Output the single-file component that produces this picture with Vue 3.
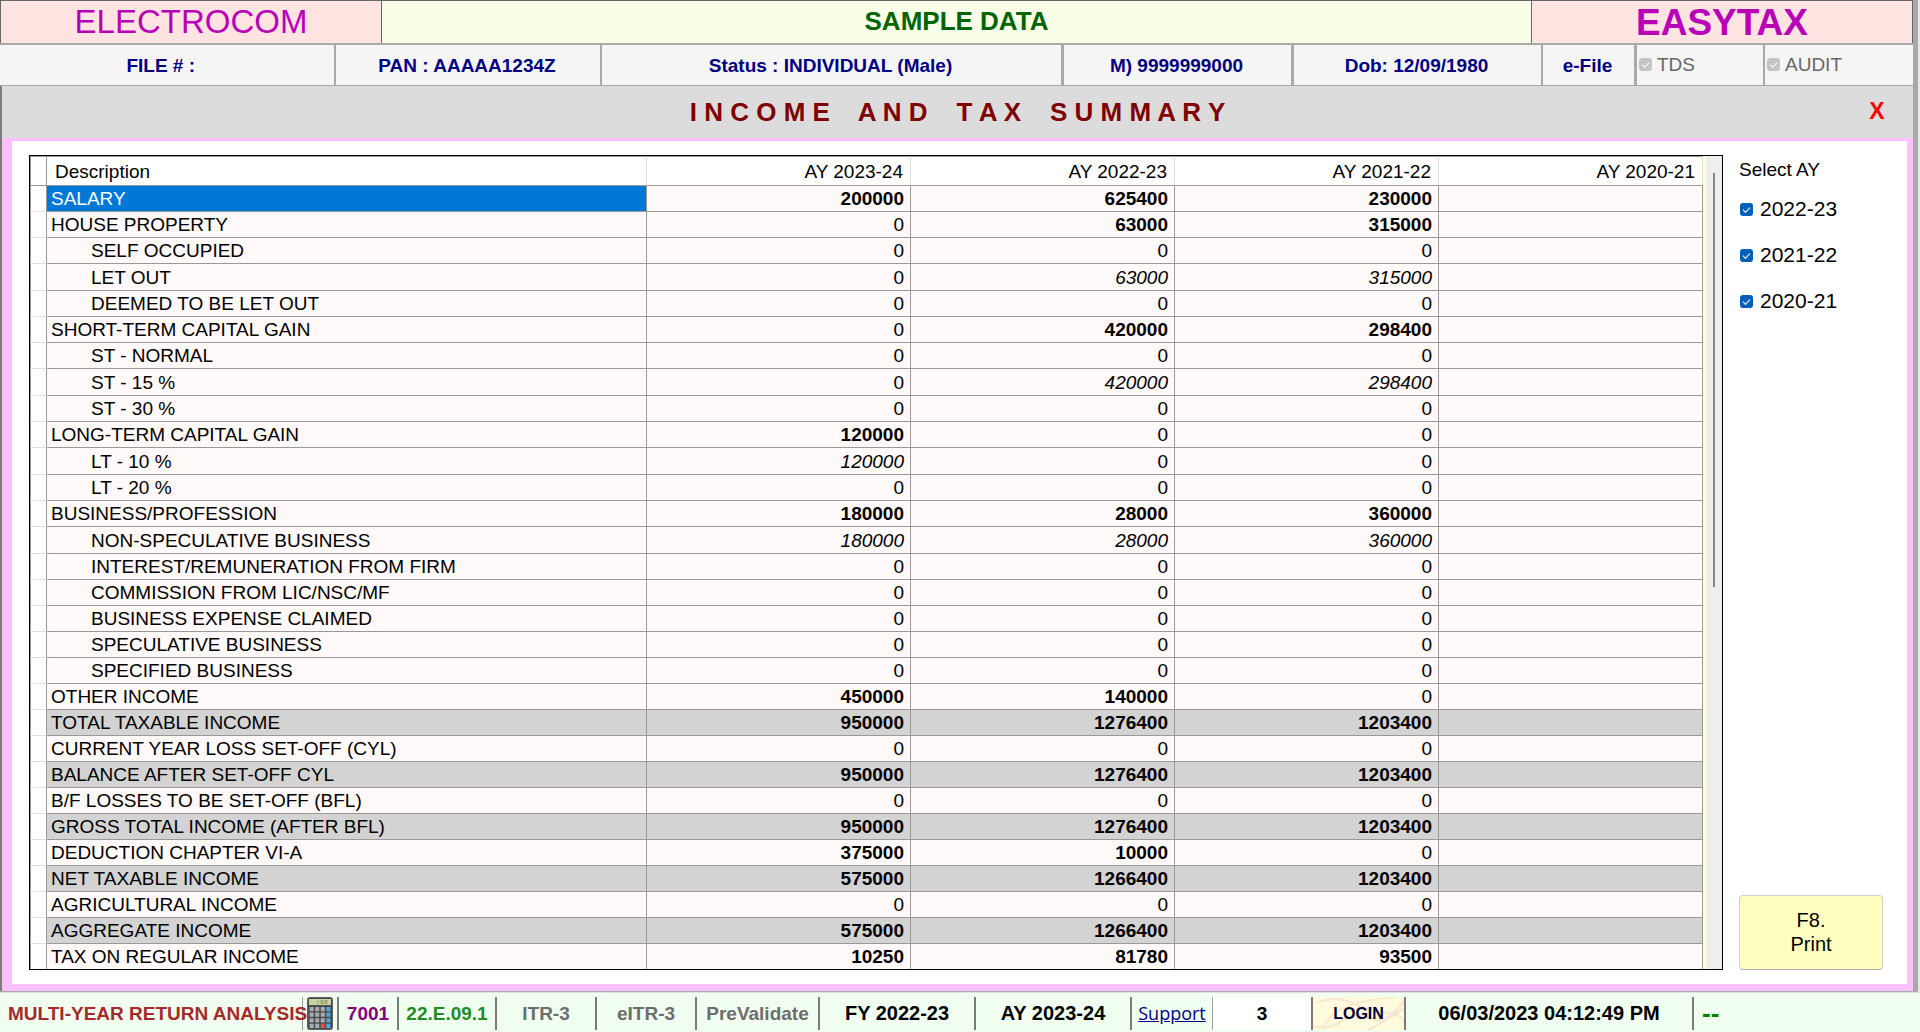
<script setup>
import { reactive } from 'vue'

const title = ['INCOME', 'AND', 'TAX', 'SUMMARY']
  .map((word) => word.split('').join(' '))
  .join('    ')

const years = ['2023-24', '2022-23', '2021-22', '2020-21']

// kind: b = bold amount, i = italic amount, n = plain amount
const rows = [
  { label: 'SALARY', cells: ['b200000', 'b625400', 'b230000'], selected: true },
  { label: 'HOUSE PROPERTY', cells: ['n0', 'b63000', 'b315000'] },
  { label: 'SELF OCCUPIED', sub: true, cells: ['n0', 'n0', 'n0'] },
  { label: 'LET OUT', sub: true, cells: ['n0', 'i63000', 'i315000'] },
  { label: 'DEEMED TO BE LET OUT', sub: true, cells: ['n0', 'n0', 'n0'] },
  { label: 'SHORT-TERM CAPITAL GAIN', cells: ['n0', 'b420000', 'b298400'] },
  { label: 'ST - NORMAL', sub: true, cells: ['n0', 'n0', 'n0'] },
  { label: 'ST - 15 %', sub: true, cells: ['n0', 'i420000', 'i298400'] },
  { label: 'ST - 30 %', sub: true, cells: ['n0', 'n0', 'n0'] },
  { label: 'LONG-TERM CAPITAL GAIN', cells: ['b120000', 'n0', 'n0'] },
  { label: 'LT - 10 %', sub: true, cells: ['i120000', 'n0', 'n0'] },
  { label: 'LT - 20 %', sub: true, cells: ['n0', 'n0', 'n0'] },
  { label: 'BUSINESS/PROFESSION', cells: ['b180000', 'b28000', 'b360000'] },
  { label: 'NON-SPECULATIVE BUSINESS', sub: true, cells: ['i180000', 'i28000', 'i360000'] },
  { label: 'INTEREST/REMUNERATION FROM FIRM', sub: true, cells: ['n0', 'n0', 'n0'] },
  { label: 'COMMISSION FROM LIC/NSC/MF', sub: true, cells: ['n0', 'n0', 'n0'] },
  { label: 'BUSINESS EXPENSE CLAIMED', sub: true, cells: ['n0', 'n0', 'n0'] },
  { label: 'SPECULATIVE BUSINESS', sub: true, cells: ['n0', 'n0', 'n0'] },
  { label: 'SPECIFIED BUSINESS', sub: true, cells: ['n0', 'n0', 'n0'] },
  { label: 'OTHER INCOME', cells: ['b450000', 'b140000', 'n0'] },
  { label: 'TOTAL TAXABLE INCOME', total: true, cells: ['b950000', 'b1276400', 'b1203400'] },
  { label: 'CURRENT YEAR LOSS SET-OFF (CYL)', cells: ['n0', 'n0', 'n0'] },
  { label: 'BALANCE AFTER SET-OFF CYL', total: true, cells: ['b950000', 'b1276400', 'b1203400'] },
  { label: 'B/F LOSSES TO BE SET-OFF (BFL)', cells: ['n0', 'n0', 'n0'] },
  { label: 'GROSS TOTAL INCOME (AFTER BFL)', total: true, cells: ['b950000', 'b1276400', 'b1203400'] },
  { label: 'DEDUCTION CHAPTER VI-A', cells: ['b375000', 'b10000', 'n0'] },
  { label: 'NET TAXABLE INCOME', total: true, cells: ['b575000', 'b1266400', 'b1203400'] },
  { label: 'AGRICULTURAL INCOME', cells: ['n0', 'n0', 'n0'] },
  { label: 'AGGREGATE INCOME', total: true, cells: ['b575000', 'b1266400', 'b1203400'] },
  { label: 'TAX ON REGULAR INCOME', cells: ['b10250', 'b81780', 'b93500'] },
].map((r) => ({ ...r, detail: r.cells.some((c) => c[0] === 'i') }))

const picks = reactive([
  { year: '2022-23', on: true },
  { year: '2021-22', on: true },
  { year: '2020-21', on: true },
])

const keys = [0, 1, 2, 3]
const keyColor = (r, c) => (c === 3 ? '#4fa8d8' : r === 3 && c === 2 ? '#e0524a' : '#a9abae')
</script>

<template>
  <div class="app">
    <div class="window">
      <header class="brand">
        <div class="brand-name">ELECTROCOM</div>
        <div class="client">SAMPLE DATA</div>
        <div class="product">EASYTAX</div>
      </header>

      <div class="facts">
        <div>FILE # :&nbsp;&nbsp;</div>
        <div>PAN : AAAAA1234Z</div>
        <div class="thick">Status : INDIVIDUAL (Male)</div>
        <div class="thick">M) 9999999000</div>
        <div>Dob: 12/09/1980</div>
        <div class="thick">e-File</div>
        <label class="flag"><input type="checkbox" checked disabled />TDS</label>
        <label class="flag"><input type="checkbox" checked disabled />AUDIT</label>
      </div>

      <main class="panel">
        <div class="title">
          <h1>{{ title }}</h1>
          <button type="button" class="close" aria-label="Close">X</button>
        </div>

        <div class="body">
          <div class="grid-box">
            <table class="summary">
              <colgroup>
                <col class="c-mark" />
                <col class="c-desc" />
                <col v-for="y in years" :key="y" />
              </colgroup>
              <thead>
                <tr>
                  <th class="mark"></th>
                  <th class="desc">Description</th>
                  <th v-for="y in years" :key="y">AY {{ y }}</th>
                </tr>
              </thead>
              <tbody>
                <tr
                  v-for="r in rows"
                  :key="r.label"
                  :class="{ total: r.total, selected: r.selected, detail: r.detail }"
                >
                  <td class="mark"></td>
                  <td class="desc" :class="{ sub: r.sub }">{{ r.label }}</td>
                  <td v-for="(c, i) in r.cells" :key="i" :class="c[0]">{{ c.slice(1) }}</td>
                  <td></td>
                </tr>
              </tbody>
            </table>
            <div class="scroll"><div class="thumb"></div></div>
          </div>

          <aside class="side">
            <fieldset>
              <legend>Select AY</legend>
              <label v-for="p in picks" :key="p.year">
                <input v-model="p.on" type="checkbox" />{{ p.year }}
              </label>
            </fieldset>
            <button type="button" class="print">F8.<br />Print</button>
          </aside>
        </div>
      </main>
    </div>

    <footer class="status">
      <div class="screen">MULTI-YEAR RETURN ANALYSIS</div>
      <button type="button" class="calc" aria-label="Calculator">
        <svg width="26" height="33" viewBox="0 0 26 33">
          <rect x="0.5" y="0.5" width="25" height="32" rx="2" fill="#4a4e52" stroke="#5d6063" />
          <rect x="2" y="2" width="22" height="6" fill="#c9d3a0" />
          <path d="M11 3.5v3M14 3.5h2v3h-2zM18 3.5h2v3h-2z" stroke="#8d966c" fill="none" />
          <template v-for="r in keys" :key="r">
            <rect
              v-for="c in keys"
              :key="c"
              :x="2.6 + c * 5.6"
              :y="10 + r * 5.6"
              width="4"
              height="4.2"
              rx="0.6"
              :fill="keyColor(r, c)"
            />
          </template>
        </svg>
      </button>
      <div class="user">7001</div>
      <div class="version">22.E.09.1</div>
      <div class="off">ITR-3</div>
      <div class="off">eITR-3</div>
      <div class="off">PreValidate</div>
      <div class="period">FY 2022-23</div>
      <div class="period">AY 2023-24</div>
      <div class="support"><a href="#support">Support</a></div>
      <div class="count">3</div>
      <button type="button" class="login">
        <svg viewBox="0 0 92 34" preserveAspectRatio="none" aria-hidden="true">
          <path d="M0 30Q18 34 30 24T58 22T92 4" stroke="#f8ead0" stroke-width="3" />
          <path d="M4 6Q22 -2 40 6T74 16T92 26" stroke="#f9e6d6" stroke-width="2" />
          <path d="M10 34Q14 18 34 10T84 0" stroke="#f8ead0" stroke-width="2" />
          <path d="M56 34Q70 26 92 12" stroke="#f7e2d0" stroke-width="2" />
        </svg>
        <span>LOGIN</span>
      </button>
      <div class="period">06/03/2023 04:12:49 PM</div>
      <div class="dash">--</div>
    </footer>
  </div>
</template>

<style>
body {
  margin: 0;
  background: #e8e8e8;
}
</style>

<style scoped>
.app {
  min-height: 100vh;
  display: flex;
  flex-direction: column;
  font: 19px/24px "Liberation Sans", Arial, sans-serif;
  color: #000;
  background: #e8e8e8;
}
.app *,
.app *::after {
  box-sizing: border-box;
}
button {
  font: inherit;
  color: inherit;
  padding: 0;
  border: 0;
  background: none;
}

.window {
  flex: 1;
  display: flex;
  flex-direction: column;
  margin-right: 2px;
  border-right: 5px solid #a9a9a9;
  border-bottom: 1px solid #a9a9a9;
}

/* Brand row */
.brand {
  display: grid;
  grid-template-columns: 380fr 1151fr 380fr;
  height: 43px;
  border: 1px solid #666;
  text-align: center;
  line-height: 41px;
}
.brand-name,
.product {
  background: #ffe4e1;
  color: #b800b8;
}
.brand-name {
  font-size: 33px;
}
.client {
  border: solid #666;
  border-width: 0 1px;
  background: #f9ffe6;
  color: #006400;
  font-size: 26px;
  font-weight: bold;
}
.product {
  font-size: 37px;
  font-weight: bold;
  line-height: 43px;
}

/* Assessee facts */
.facts {
  display: grid;
  grid-template-columns: 336fr 266fr 462fr 230fr 249fr 94fr 128fr 148fr;
  height: 43px;
  border-top: 2px solid #a9a9a9;
  border-bottom: 1px solid #a9a9a9;
  background: #f5f5f5;
  color: navy;
  font-weight: bold;
  text-align: center;
  line-height: 41px;
}
.facts > * {
  padding-right: 2px;
  border-right: 2px solid #a9a9a9;
}
.facts > .thick {
  border-right-width: 3px;
}
.facts > :last-child {
  border-right: 0;
}
.flag {
  display: flex;
  align-items: center;
  gap: 5px;
  padding: 0 0 2px 2px;
  color: #666;
  font-weight: normal;
  line-height: 37px;
}

input[type='checkbox'] {
  appearance: none;
  position: relative;
  flex: none;
  width: 13px;
  height: 13px;
  margin: 0;
  border-radius: 3px;
  background: #fff;
  border: 1px solid #888;
}
input:checked {
  border: 0;
  background: #005fb8;
}
input:disabled {
  background: #c4c4c4;
}
input:checked::after {
  content: '';
  position: absolute;
  left: 3px;
  top: 4px;
  width: 7px;
  height: 4px;
  border: solid #fff;
  border-width: 0 0 1px 1px;
  transform: rotate(-45deg);
}

/* Panel */
.panel {
  flex: 1;
  display: flex;
  flex-direction: column;
  border-left: 2px solid #7d7d7d;
  background: #fff;
}
.title {
  position: relative;
  height: 52px;
  background: #dcdcdc;
}
.title h1 {
  margin: 0;
  color: maroon;
  font-size: 26px;
  line-height: 52px;
  text-align: center;
  white-space: pre;
}
.close {
  position: absolute;
  right: 21px;
  top: 13px;
  width: 30px;
  color: #f00;
  font-size: 23px;
  font-weight: bold;
}
.body {
  flex: 1;
  display: flex;
  align-items: stretch;
  padding: 14px 24px 14px 17px;
  border: solid #ffc0ff;
  border-width: 3px 6px 7px 10px;
}
.grid-box {
  flex: 1;
  display: flex;
  border: 1px solid #000;
}

.summary {
  flex: 1;
  table-layout: fixed;
  border-spacing: 0;
  width: 0;
  background: #fff;
}
.c-mark {
  width: 17px;
}
.c-desc {
  width: 600px;
}
.summary th,
.summary td {
  height: 26px;
  padding: 1px 6px 0;
  border: solid #999;
  border-width: 0 1px 1px 0;
  text-align: right;
  white-space: nowrap;
}
.summary th {
  height: 30px;
  border-top: 1px solid #999;
  border-right-color: #e0e0e0;
  padding-right: 7px;
  font-weight: normal;
}
.summary td {
  background: #fff9f9;
}
.summary .detail td {
  height: 27px;
}
.summary .total td {
  background: #d3d3d3;
}
.summary .desc {
  padding-left: 4px;
  text-align: left;
}
.summary th.desc {
  padding-left: 8px;
}
.summary .sub {
  padding-left: 44px;
}
.summary .selected .desc {
  background: #0078d7;
  color: #fff;
}
.summary tr .mark {
  background: #fff;
  border-left: 1px solid #999;
  border-right-color: #999;
  padding: 0;
}
.summary td.mark {
  border-bottom-color: #e0e0e0;
}
.summary tbody tr:last-child td {
  height: 25px;
  border-bottom: 0;
}
.b {
  font-weight: bold;
}
.i {
  font-style: italic;
}

.scroll {
  width: 19px;
  border-left: 3px solid #ffffe0;
  background: #eee;
  padding-top: 17px;
}
.thumb {
  width: 2px;
  height: 52%;
  margin-left: 7px;
  background: #868686;
}

/* Year picker */
.side {
  flex: none;
  width: 160px;
  padding-left: 16px;
  display: flex;
  flex-direction: column;
  justify-content: space-between;
}
fieldset {
  margin: 0;
  padding: 0;
  border: 0;
}
legend {
  padding: 3px 0 0;
  margin-bottom: 15px;
}
fieldset label {
  display: flex;
  align-items: center;
  gap: 7px;
  height: 24px;
  margin-bottom: 22px;
  padding-left: 1px;
  font-size: 21px;
}
.print {
  height: 75px;
  padding-bottom: 2px;
  border: 1px solid #d0d0d0;
  border-bottom-color: #b0b0b0;
  border-radius: 4px;
  background: #ffffc0;
  font-size: 20px;
  line-height: 24px;
}

/* Status bar */
.status {
  display: grid;
  grid-template-columns: 303fr 36fr 60fr 98fr 100fr 100fr 123fr 156fr 156fr 81fr 100fr 93fr 288fr 226fr;
  height: 40px;
  padding: 4px 0 2px;
  background: #f0fff0;
  border-top: 1px solid #e0e0e0;
  font-weight: bold;
  text-align: center;
  line-height: 33px;
  white-space: nowrap;
}
.status > * {
  min-width: 0;
  border-right: 2px solid #7a7a7a;
}
.status > :last-child {
  border-right: 0;
}
.status .screen {
  padding-left: 8px;
  border-right: 1px solid #999;
  color: #a52a2a;
  text-align: left;
}
.calc {
  display: flex;
  align-items: center;
  padding-left: 4px;
}
.user {
  color: purple;
}
.version {
  color: #228b22;
}
.off {
  color: #6d6d6d;
}
.period {
  font-size: 20px;
}
.status .support {
  border-right: 1px solid #a0a0a0;
  font: 18px/33px "Open Sans", "Noto Sans", sans-serif;
}
.support a {
  color: navy;
}
.count {
  background: #fff;
}
.login {
  position: relative;
  background: #fffbdc;
  color: #00003c;
  font-size: 16px;
  font-weight: bold;
}
.login svg {
  position: absolute;
  left: 0;
  top: 0;
  width: 100%;
  height: 100%;
  fill: none;
}
.login span {
  position: relative;
}
.status .dash {
  padding-left: 8px;
  color: green;
  font-size: 26px;
  text-align: left;
}
</style>
